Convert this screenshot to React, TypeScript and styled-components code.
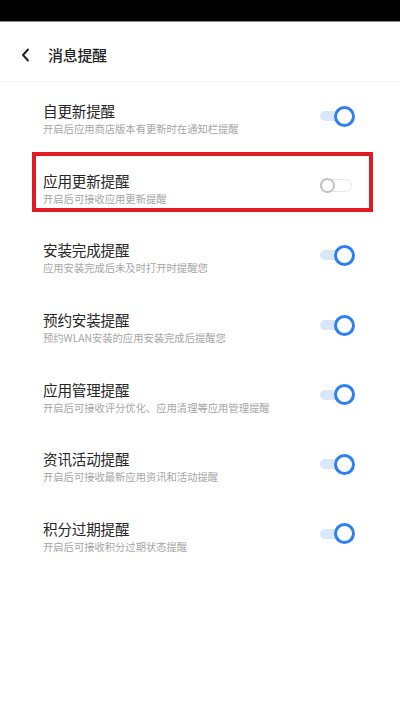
import React from "react";
import styled, { createGlobalStyle } from "styled-components";

const Global = createGlobalStyle`
  html, body { margin: 0; padding: 0; background: #fff; }
  body { font-family: "Noto Sans CJK SC", "Noto Sans", sans-serif; }
`;

const Page = styled.div`
  width: 400px;
  height: 710px;
  background: #fff;
  display: flex;
  flex-direction: column;
  overflow: hidden;
`;

const StatusBar = styled.div`
  height: 21px;
  background: #000;
  border-bottom: 1px solid #8a8a8a;
`;

const Header = styled.div`
  height: 60px;
  box-sizing: border-box;
  padding: 6px 0 0 20px;
  display: flex;
  align-items: center;
  gap: 17px;
  border-bottom: 1px solid #f1f1f1;
`;

const Title = styled.div`
  font-size: 15px;
  font-weight: 500;
  color: #1f1f1f;
  letter-spacing: -0.3px;
  margin-top: -1px;
`;

const List = styled.div`
  display: flex;
  flex-direction: column;
  padding-top: 2px;
`;

const Row = styled.div`
  position: relative;
  height: 69.6px;
  display: flex;
  align-items: center;
  padding: 0 45px 0 43px;
`;

const Texts = styled.div`
  flex: 1;
  display: flex;
  flex-direction: column;
`;

const RowTitle = styled.div`
  font-size: 14.6px;
  line-height: 20px;
  color: #262626;
  letter-spacing: -0.2px;
`;

const RowSub = styled.div`
  font-size: 10.3px;
  line-height: 14px;
  margin-top: 1px;
  color: #a6a6a6;
`;

const Track = styled.div<{ $on: boolean }>`
  position: relative;
  flex: none;
  margin-bottom: 5px;
  box-sizing: border-box;
  border-radius: 8px;
  ${(p) =>
    p.$on
      ? `width: 30px; height: 10px; margin-right: 5px; background: #d9e7fb;`
      : `width: 32px; height: 13px; margin-right: 3px; background: #fff; border: 1px solid #e6e6e6;`}
`;

const Knob = styled.div<{ $on: boolean }>`
  position: absolute;
  top: 50%;
  box-sizing: border-box;
  border-radius: 50%;
  background: #fff;
  ${(p) =>
    p.$on
      ? `width: 21px; height: 21px; right: -5px; margin-top: -10.5px; border: 3px solid #2e7ff0;`
      : `width: 15px; height: 15px; left: -1px; margin-top: -7.5px; border: 2px solid #c2c2c2;`}
`;

const Highlight = styled.div`
  position: absolute;
  left: 32px;
  top: -2px;
  width: 341px;
  height: 60px;
  box-sizing: border-box;
  border: 4.5px solid #e11a24;
  pointer-events: none;
`;

const items = [
  { t: "自更新提醒", s: "开启后应用商店版本有更新时在通知栏提醒", on: true },
  { t: "应用更新提醒", s: "开启后可接收应用更新提醒", on: false, mark: true },
  { t: "安装完成提醒", s: "应用安装完成后未及时打开时提醒您", on: true },
  { t: "预约安装提醒", s: "预约WLAN安装的应用安装完成后提醒您", on: true },
  { t: "应用管理提醒", s: "开启后可接收评分优化、应用清理等应用管理提醒", on: true },
  { t: "资讯活动提醒", s: "开启后可接收最新应用资讯和活动提醒", on: true },
  { t: "积分过期提醒", s: "开启后可接收积分过期状态提醒", on: true },
];

export default function App() {
  return (
    <Page>
      <Global />
      <StatusBar />
      <Header>
        <svg width="11" height="14" viewBox="0 0 11 14">
          <path d="M8 1.5 L3 7 L8 12.5" fill="none" stroke="#222" strokeWidth="2" strokeLinecap="round" strokeLinejoin="round" />
        </svg>
        <Title>消息提醒</Title>
      </Header>
      <List>
        {items.map((it) => (
          <Row key={it.t}>
            <Texts>
              <RowTitle>{it.t}</RowTitle>
              <RowSub>{it.s}</RowSub>
            </Texts>
            <Track $on={it.on}>
              <Knob $on={it.on} />
            </Track>
            {it.mark && <Highlight />}
          </Row>
        ))}
      </List>
    </Page>
  );
}
